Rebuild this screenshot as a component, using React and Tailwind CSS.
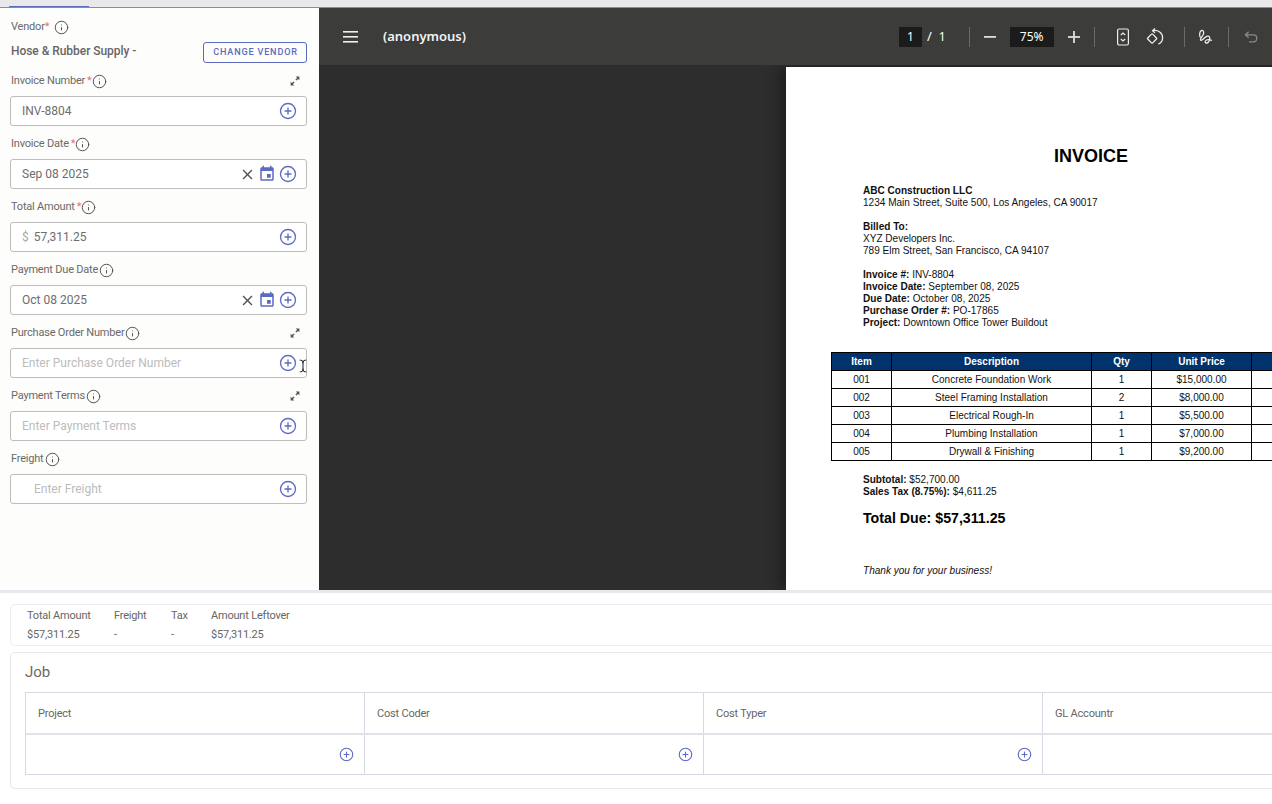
import { CirclePlus, Info, TextCursor } from 'lucide-react';
import { MdClose, MdEvent } from 'react-icons/md';

const FIELDS = [
  { label: 'Invoice Number', required: true, value: 'INV-8804', expand: true },
  { label: 'Invoice Date', required: true, value: 'Sep 08 2025', date: true },
  { label: 'Total Amount', required: true, value: '57,311.25', prefix: '$' },
  { label: 'Payment Due Date', value: 'Oct 08 2025', date: true },
  { label: 'Purchase Order Number', placeholder: 'Enter Purchase Order Number', expand: true, cursor: true },
  { label: 'Payment Terms', placeholder: 'Enter Payment Terms', expand: true },
  { label: 'Freight', placeholder: 'Enter Freight', indent: true },
];

const ROWS = [
  ['001', 'Concrete Foundation Work', '1', '$15,000.00'],
  ['002', 'Steel Framing Installation', '2', '$8,000.00'],
  ['003', 'Electrical Rough-In', '1', '$5,500.00'],
  ['004', 'Plumbing Installation', '1', '$7,000.00'],
  ['005', 'Drywall & Finishing', '1', '$9,200.00'],
];

const META = [
  ['Invoice #:', 'INV-8804'],
  ['Invoice Date:', 'September 08, 2025'],
  ['Due Date:', 'October 08, 2025'],
  ['Purchase Order #:', 'PO-17865'],
  ['Project:', 'Downtown Office Tower Buildout'],
];

const SUMMARY = [
  ['Total Amount', '$57,311.25', 'w-[87px]'],
  ['Freight', '-', 'w-[57px]'],
  ['Tax', '-', 'w-[40px]'],
  ['Amount Leftover', '$57,311.25', 'w-[100px]'],
];

function ExpandIcon() {
  return (
    <svg width="10" height="10" viewBox="0 0 10 10" className="text-[#555]" fill="currentColor">
      <path d="M5.8 0.6H9.4V4.2L8.1 2.9L6.4 4.6L5.4 3.6L7.1 1.9Z" />
      <path d="M0.6 5.8V9.4H4.2L2.9 8.1L4.6 6.4L3.6 5.4L1.9 7.1Z" />
    </svg>
  );
}

function Field({ field }) {
  return (
    <div className="mb-[7px]">
      <div className="flex items-center h-[22px] mb-[4px] ml-px text-[11px] tracking-[-0.2px] text-[#6a6a6a]">
        <span>{field.label}</span>
        {field.required ? <span className="text-[#e57373] ml-[2px]">*</span> : <span className="w-[1px]" />}
        <Info className="w-[15px] h-[15px] text-[#555]" strokeWidth={1.6} />
        {field.expand && <span className="ml-auto mr-[7px] flex"><ExpandIcon /></span>}
      </div>
      <div className="relative h-[30px] flex items-center border border-[#bdbdbd] rounded-[3px] bg-white pl-[11px] pr-[9px] text-[12px] text-[#6d6d6d]">
        {field.prefix && <span className="text-[#a8a8a8] mr-[5px]">{field.prefix}</span>}
        {field.value ? (
          <span>{field.value}</span>
        ) : (
          <span className={`text-[#bcbcbc] ${field.indent ? 'ml-[12px]' : ''}`}>{field.placeholder}</span>
        )}
        <div className="ml-auto flex items-center">
          {field.date && (
            <>
              <MdClose className="w-[17px] h-[17px] text-[#555] mr-[2px]" />
              <MdEvent className="w-[18px] h-[18px] text-[#5c6bc0] mr-[3px]" />
            </>
          )}
          <CirclePlus className="w-[18px] h-[18px] text-[#5f6bc4]" strokeWidth={1.8} />
        </div>
        {field.cursor && <TextCursor className="absolute right-[-4px] top-[8px] w-[14px] h-[18px] text-black" strokeWidth={1.5} />}
      </div>
    </div>
  );
}

function Sidebar() {
  return (
    <div className="w-[319px] shrink-0 bg-[#fdfdfb] pl-[10px] pr-[12px] overflow-hidden">
      <div className="flex items-center h-[20px] mt-[9px] ml-px text-[11px] tracking-[-0.2px] text-[#6a6a6a]">
        <span>Vendor</span>
        <span className="text-[#e57373]">*</span>
        <Info className="w-[15px] h-[15px] text-[#555] ml-[5px]" strokeWidth={1.6} />
      </div>
      <div className="flex items-start justify-between h-[28px] mt-[5px]">
        <span className="text-[12px] font-medium tracking-[-0.05px] text-[#666] ml-px">Hose &amp; Rubber Supply -</span>
        <button className="w-[104px] h-[21px] pl-px border border-[#5c6bc0] rounded-[3px] text-[9.1px] font-medium tracking-[0.09em] text-[#5c6bc0]">CHANGE VENDOR</button>
      </div>
      {FIELDS.map((f) => <Field key={f.label} field={f} />)}
    </div>
  );
}

function Divider({ className }) {
  return <span className={`w-px h-[20px] bg-[#6a6a6a] ${className}`} />;
}

function Toolbar() {
  return (
    <div className="h-[57px] shrink-0 bg-[#3c3c3b] flex items-center text-white font-['Noto_Sans',sans-serif]">
      <svg width="16" height="12" viewBox="0 0 16 12" className="ml-[24px] shrink-0" fill="#eee">
        <rect x="0" y="0" width="15" height="1.6" />
        <rect x="0" y="5" width="15" height="1.6" />
        <rect x="0" y="10" width="15" height="1.6" />
      </svg>
      <span className="ml-[24px] text-[13px] font-semibold text-[#f2f2f2]">(anonymous)</span>
      <span className="ml-[433px] w-[23px] h-[20px] bg-[#1b1b1b] flex items-center justify-center text-[12px]">1</span>
      <span className="ml-[5px] text-[13px]">/</span>
      <span className="ml-[7px] text-[12px]">1</span>
      <Divider className="ml-[23px]" />
      <svg width="12" height="2" viewBox="0 0 12 2" className="ml-[14px]" fill="#ddd"><rect width="12" height="1.8" /></svg>
      <span className="ml-[14px] w-[44px] h-[20px] bg-[#1b1b1b] flex items-center justify-center text-[12px]">75%</span>
      <svg width="12" height="12" viewBox="0 0 12 12" className="ml-[14px]" fill="#ddd"><rect y="5.1" width="12" height="1.8" /><rect x="5.1" width="1.8" height="12" /></svg>
      <Divider className="ml-[14px]" />
      <svg width="14" height="18" viewBox="0 0 14 18" className="ml-[21px]" fill="none" stroke="#eee" strokeWidth="1.2">
        <rect x="1.6" y="1" width="10.8" height="16" rx="1.5" />
        <path d="M4.8 7L7 5L9.2 7M4.8 11L7 13L9.2 11" />
      </svg>
      <svg width="18" height="18" viewBox="0 0 18 18" className="ml-[16px]" fill="none" stroke="#eee" strokeWidth="1.3">
        <rect x="2.6" y="7" width="7" height="7" rx="0.8" transform="rotate(45 6.1 10.5)" />
        <path d="M7 2.6C12 1.6 16.6 5 16.6 9.6C16.6 12.6 14.8 15.2 12.4 16.2" />
        <path d="M9 0.6L6.6 2.7L9 4.8" />
      </svg>
      <Divider className="ml-[20px]" />
      <svg width="16" height="16" viewBox="0 0 16 16" className="ml-[12px]" fill="none" stroke="#eee" strokeWidth="1.3">
        <path d="M3.500 8.500C2 7 2.500 2 4.500 1.500C6.500 1 7.500 3.500 6 6C5 7.700 3.500 9 3.500 10.500C3.500 12.500 6 10.500 8 8.500C9.500 7 11.500 6.500 12.500 8C13.500 10 12 13.500 10 14C8 14.500 7.500 12 9.500 11C11 10.300 13 10.500 15 11.500" />
      </svg>
      <Divider className="ml-[15px]" />
      <svg width="14" height="12" viewBox="0 0 14 12" className="ml-[15px]" fill="none" stroke="#8a8a8a" strokeWidth="1.3">
        <path d="M4.600 0.800L1.400 3.800L4.600 6.800M1.400 3.800H9.500C11.500 3.800 12.800 5.200 12.800 7.300C12.800 9.400 11.500 10.800 9.500 10.800H5" />
      </svg>
    </div>
  );
}

function InvoicePage() {
  return (
    <div className="w-[610px] shrink-0 mt-[2px] bg-white pt-[79px] text-[10.05px] leading-[12px] text-[#111] font-['Liberation_Sans',sans-serif] shadow-[-6px_0_12px_rgba(0,0,0,0.35)]">
      <div className="text-center text-[18px] leading-[20px] font-bold text-black">INVOICE</div>
      <div className="ml-[77px] mt-[19px]">
        <div className="font-bold">ABC Construction LLC</div>
        <div>1234 Main Street, Suite 500, Los Angeles, CA 90017</div>
        <div className="font-bold mt-[12px]">Billed To:</div>
        <div>XYZ Developers Inc.</div>
        <div>789 Elm Street, San Francisco, CA 94107</div>
        <div className="mt-[12px]">
          {META.map(([k, v]) => (
            <div key={k}><span className="font-bold">{k}</span> {v}</div>
          ))}
        </div>
      </div>
      <table className="ml-[45px] mt-[23px] w-[520px] table-fixed border-collapse text-center text-[10px]">
        <thead>
          <tr className="h-[18px] bg-[#00336b] text-white font-bold">
            <th className="w-[60px] border border-black">Item</th>
            <th className="w-[200px] border border-black">Description</th>
            <th className="w-[60px] border border-black">Qty</th>
            <th className="w-[100px] border border-black">Unit Price</th>
            <th className="border border-black"></th>
          </tr>
        </thead>
        <tbody>
          {ROWS.map((r) => (
            <tr key={r[0]} className="h-[18px]">
              {r.map((c, i) => <td key={i} className="border border-black">{c}</td>)}
              <td className="border border-black"></td>
            </tr>
          ))}
        </tbody>
      </table>
      <div className="ml-[77px] mt-[13px]">
        <div><span className="font-bold">Subtotal:</span> $52,700.00</div>
        <div><span className="font-bold">Sales Tax (8.75%):</span> $4,611.25</div>
        <div className="mt-[12px] text-[14.2px] leading-[16px] font-bold text-black">Total Due: $57,311.25</div>
        <div className="mt-[39px] italic">Thank you for your business!</div>
      </div>
    </div>
  );
}

function JobCell({ last }) {
  return (
    <div className={`w-[339px] shrink-0 h-full flex items-center justify-end pr-[10px] ${last ? '' : 'border-r border-[#d8d8e4]'}`}>
      {!last && <CirclePlus className="w-[15px] h-[15px] text-[#5f6bc4]" strokeWidth={1.8} />}
    </div>
  );
}

export default function App() {
  return (
    <div className="w-[1272px] h-[804px] overflow-hidden bg-white flex flex-col font-['Roboto',sans-serif]">
      <div className="h-[8px] shrink-0 bg-[#e9e9ec] border-b border-[#8d8d8d] pl-[9px] flex items-end">
        <div className="w-[80px] h-[1px] bg-[#5c6bc0]" />
      </div>

      <div className="h-[582px] shrink-0 flex">
        <Sidebar />
        <div className="flex-1 min-w-0 flex flex-col bg-[#2d2d2e] overflow-hidden">
          <Toolbar />
          <div className="flex-1 min-h-0 flex pl-[467px] overflow-hidden">
            <InvoicePage />
          </div>
        </div>
      </div>

      <div className="h-[3px] shrink-0 bg-[#e8e8ee]" />

      <div className="pl-[10px] w-[1290px] pt-[11px]">
        <div className="h-[42px] border border-[#ececf2] rounded-[5px] flex pl-[16px] pt-[1px] text-[11px] tracking-[-0.2px] text-[#666]">
          {SUMMARY.map(([label, value, w]) => (
            <div key={label} className={`${w} shrink-0`}>
              <div className="h-[19px] leading-[19px] whitespace-nowrap">{label}</div>
              <div className="h-[19px] leading-[19px]">{value}</div>
            </div>
          ))}
        </div>

        <div className="mt-[6px] h-[137px] border border-[#e6e6ee] rounded-[5px] pl-[14px] pt-[10px]">
          <div className="h-[19px] text-[15px] leading-[19px] text-[#6a6a6a]">Job</div>
          <div className="mt-[10px] border border-[#d8d8e4] h-[83px]">
            <div className="h-[42px] flex items-center text-[11px] tracking-[-0.2px] text-[#666] border-b-2 border-[#e2e2ea]">
              {['Project', 'Cost Coder', 'Cost Typer', 'GL Accountr'].map((h, i) => (
                <div key={h} className={`w-[339px] shrink-0 h-full flex items-center pl-[12px] pt-[2px] ${i < 3 ? 'border-r border-[#d8d8e4]' : ''}`}>{h}</div>
              ))}
            </div>
            <div className="h-[39px] flex">
              <JobCell />
              <JobCell />
              <JobCell />
              <JobCell last />
            </div>
          </div>
        </div>
      </div>
    </div>
  );
}
